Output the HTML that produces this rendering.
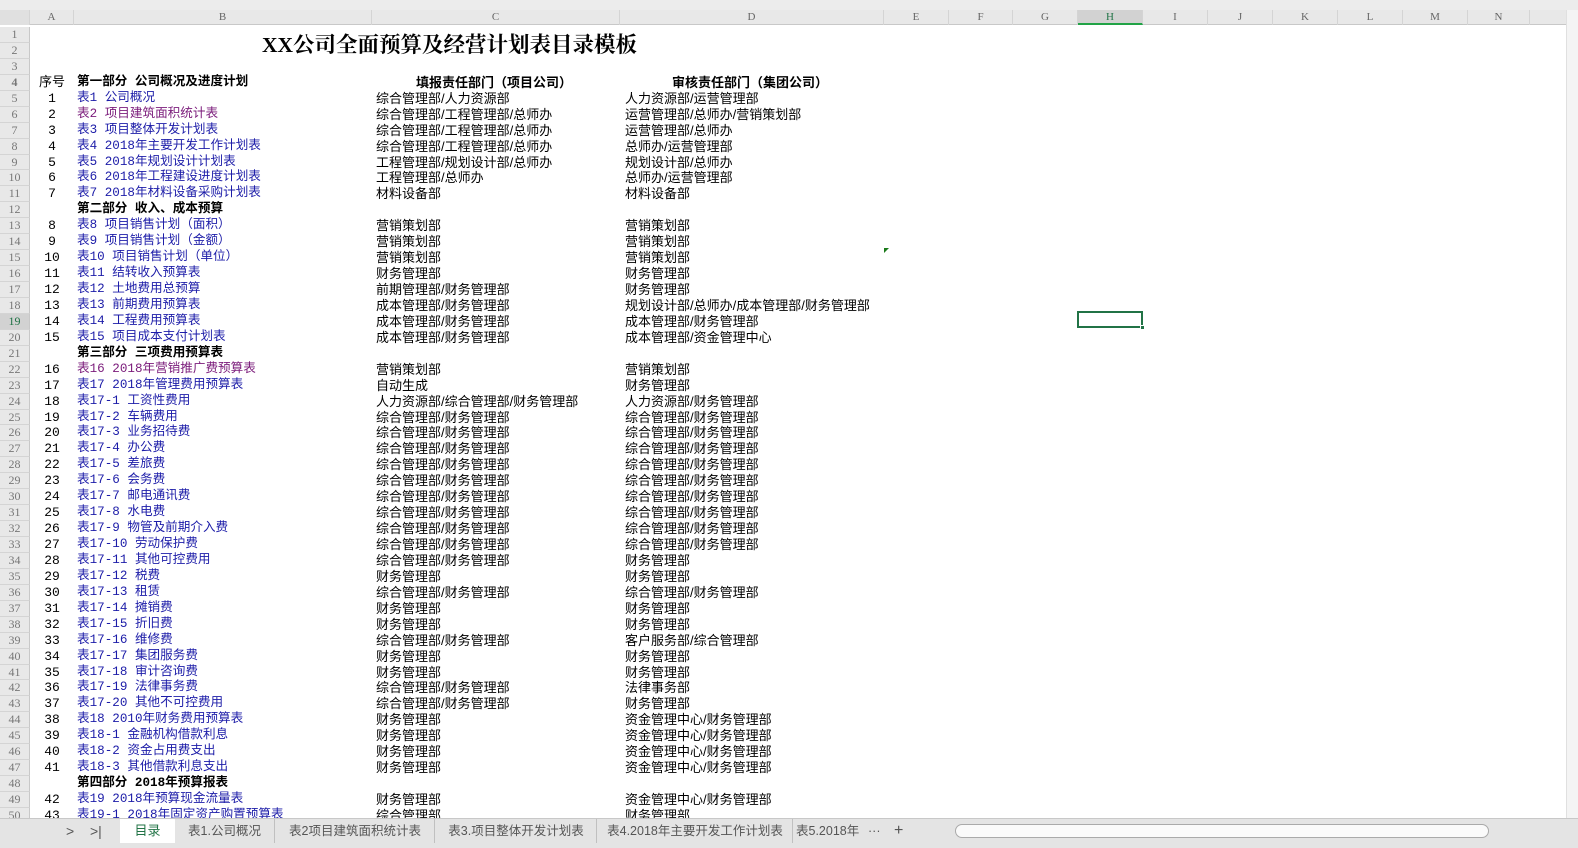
<!DOCTYPE html>
<html><head><meta charset="utf-8"><style>
*{margin:0;padding:0;box-sizing:border-box}
body{width:1578px;height:848px;overflow:hidden;background:#fff;font-family:"Liberation Sans","Noto Sans CJK SC",sans-serif;font-size:13px;position:relative}
#top{position:absolute;left:0;top:0;width:1578px;height:10px;background:#ececec}
#ch{position:absolute;left:0;top:10px;width:1578px;height:15px;background:#e8e8e8;border-bottom:1px solid #c8c8c8;color:#666;font-family:"Liberation Serif",serif;font-size:11px}
#ch span{position:absolute;top:0;height:15px;line-height:15px;text-align:center;border-right:1px solid #d4d4d4}
#rows{position:absolute;left:0;top:27px;width:1558px}
.r{position:relative;height:15.95px;line-height:15.95px;white-space:nowrap}
.r .n{position:absolute;left:0;width:30px;height:100%;background:#e8e8e8;color:#777;text-align:center;border-bottom:1px solid #d4d4d4;border-right:1px solid #c8c8c8;font-family:"Liberation Serif",serif;font-size:12px}
.r .a{position:absolute;left:30px;width:44px;text-align:center;font-family:"Liberation Mono","Noto Sans CJK SC",monospace}
.r .b{position:absolute;left:77px;color:#1c1ca8;font-size:12.6px;font-family:"Liberation Mono","Noto Sans CJK SC",monospace}
.r .c{position:absolute;left:376px}
.r .d{position:absolute;left:625px}
.p{color:#7a1a7a!important}
.h{font-weight:bold;color:#000!important}
#right{position:absolute;right:0;top:10px;width:12px;height:808px;background:#f4f4f4;border-left:1px solid #e0e0e0}
#tabs{position:absolute;left:0;top:818px;width:1578px;height:30px;background:#e4e4e4;border-top:1px solid #c8c8c8}
#tabs span{position:absolute;top:0;height:24px;line-height:24px;color:#555;font-size:12.5px}
</style></head><body>
<div id="top"></div>
<div id="ch">
<span style="left:0;width:30px;background:#e0e0e0"></span>
<span style="left:30px;width:44px">A</span>
<span style="left:74px;width:298px">B</span>
<span style="left:372px;width:248px">C</span>
<span style="left:620px;width:264px">D</span>
<span style="left:884px;width:65px">E</span>
<span style="left:949px;width:64px">F</span>
<span style="left:1013px;width:65px">G</span>
<span style="left:1078px;width:65px;background:#d2d2d2;color:#217346;border-bottom:2px solid #21a346">H</span>
<span style="left:1143px;width:65px">I</span>
<span style="left:1208px;width:65px">J</span>
<span style="left:1273px;width:65px">K</span>
<span style="left:1338px;width:65px">L</span>
<span style="left:1403px;width:65px">M</span>
<span style="left:1468px;width:62px">N</span>
</div>
<div id="rows">
<div class="r"><span class="n">1</span></div>
<div class="r"><span class="n">2</span><span style="position:absolute;left:262px;top:-5px;font-size:21.5px;font-weight:bold;font-family:'Liberation Serif','Noto Serif CJK SC',serif">XX公司全面预算及经营计划表目录模板</span></div>
<div class="r"><span class="n">3</span></div>
<div class="r h"><span class="n">4</span><span class="a h" style="font-weight:normal">序号</span><span class="b h">第一部分  公司概况及进度计划</span><span class="c h" style="left:416px">填报责任部门（项目公司）</span><span class="d h" style="left:672px">审核责任部门（集团公司）</span></div>
<div class="r"><span class="n">5</span><span class="a">1</span><span class="b">表1 公司概况</span><span class="c">综合管理部/人力资源部</span><span class="d">人力资源部/运营管理部</span></div>
<div class="r"><span class="n">6</span><span class="a">2</span><span class="b p">表2 项目建筑面积统计表</span><span class="c">综合管理部/工程管理部/总师办</span><span class="d">运营管理部/总师办/营销策划部</span></div>
<div class="r"><span class="n">7</span><span class="a">3</span><span class="b">表3 项目整体开发计划表</span><span class="c">综合管理部/工程管理部/总师办</span><span class="d">运营管理部/总师办</span></div>
<div class="r"><span class="n">8</span><span class="a">4</span><span class="b">表4 2018年主要开发工作计划表</span><span class="c">综合管理部/工程管理部/总师办</span><span class="d">总师办/运营管理部</span></div>
<div class="r"><span class="n">9</span><span class="a">5</span><span class="b">表5 2018年规划设计计划表</span><span class="c">工程管理部/规划设计部/总师办</span><span class="d">规划设计部/总师办</span></div>
<div class="r"><span class="n">10</span><span class="a">6</span><span class="b">表6 2018年工程建设进度计划表</span><span class="c">工程管理部/总师办</span><span class="d">总师办/运营管理部</span></div>
<div class="r"><span class="n">11</span><span class="a">7</span><span class="b">表7 2018年材料设备采购计划表</span><span class="c">材料设备部</span><span class="d">材料设备部</span></div>
<div class="r"><span class="n">12</span><span class="b h">第二部分   收入、成本预算</span></div>
<div class="r"><span class="n">13</span><span class="a">8</span><span class="b">表8 项目销售计划（面积）</span><span class="c">营销策划部</span><span class="d">营销策划部</span></div>
<div class="r"><span class="n">14</span><span class="a">9</span><span class="b">表9 项目销售计划（金额）</span><span class="c">营销策划部</span><span class="d">营销策划部</span></div>
<div class="r"><span class="n">15</span><span class="a">10</span><span class="b">表10 项目销售计划（单位）</span><span class="c">营销策划部</span><span class="d">营销策划部</span></div>
<div class="r"><span class="n">16</span><span class="a">11</span><span class="b">表11 结转收入预算表</span><span class="c">财务管理部</span><span class="d">财务管理部</span></div>
<div class="r"><span class="n">17</span><span class="a">12</span><span class="b">表12 土地费用总预算</span><span class="c">前期管理部/财务管理部</span><span class="d">财务管理部</span></div>
<div class="r"><span class="n">18</span><span class="a">13</span><span class="b">表13 前期费用预算表</span><span class="c">成本管理部/财务管理部</span><span class="d">规划设计部/总师办/成本管理部/财务管理部</span></div>
<div class="r"><span class="n" style="background:#d2d2d2;color:#217346">19</span><span class="a">14</span><span class="b">表14 工程费用预算表</span><span class="c">成本管理部/财务管理部</span><span class="d">成本管理部/财务管理部</span></div>
<div class="r"><span class="n">20</span><span class="a">15</span><span class="b">表15 项目成本支付计划表</span><span class="c">成本管理部/财务管理部</span><span class="d">成本管理部/资金管理中心</span></div>
<div class="r"><span class="n">21</span><span class="b h">第三部分   三项费用预算表</span></div>
<div class="r"><span class="n">22</span><span class="a">16</span><span class="b p">表16 2018年营销推广费预算表</span><span class="c">营销策划部</span><span class="d">营销策划部</span></div>
<div class="r"><span class="n">23</span><span class="a">17</span><span class="b">表17 2018年管理费用预算表</span><span class="c">自动生成</span><span class="d">财务管理部</span></div>
<div class="r"><span class="n">24</span><span class="a">18</span><span class="b">表17-1 工资性费用</span><span class="c">人力资源部/综合管理部/财务管理部</span><span class="d">人力资源部/财务管理部</span></div>
<div class="r"><span class="n">25</span><span class="a">19</span><span class="b">表17-2 车辆费用</span><span class="c">综合管理部/财务管理部</span><span class="d">综合管理部/财务管理部</span></div>
<div class="r"><span class="n">26</span><span class="a">20</span><span class="b">表17-3 业务招待费</span><span class="c">综合管理部/财务管理部</span><span class="d">综合管理部/财务管理部</span></div>
<div class="r"><span class="n">27</span><span class="a">21</span><span class="b">表17-4 办公费</span><span class="c">综合管理部/财务管理部</span><span class="d">综合管理部/财务管理部</span></div>
<div class="r"><span class="n">28</span><span class="a">22</span><span class="b">表17-5 差旅费</span><span class="c">综合管理部/财务管理部</span><span class="d">综合管理部/财务管理部</span></div>
<div class="r"><span class="n">29</span><span class="a">23</span><span class="b">表17-6  会务费</span><span class="c">综合管理部/财务管理部</span><span class="d">综合管理部/财务管理部</span></div>
<div class="r"><span class="n">30</span><span class="a">24</span><span class="b">表17-7  邮电通讯费</span><span class="c">综合管理部/财务管理部</span><span class="d">综合管理部/财务管理部</span></div>
<div class="r"><span class="n">31</span><span class="a">25</span><span class="b">表17-8 水电费</span><span class="c">综合管理部/财务管理部</span><span class="d">综合管理部/财务管理部</span></div>
<div class="r"><span class="n">32</span><span class="a">26</span><span class="b">表17-9 物管及前期介入费</span><span class="c">综合管理部/财务管理部</span><span class="d">综合管理部/财务管理部</span></div>
<div class="r"><span class="n">33</span><span class="a">27</span><span class="b">表17-10 劳动保护费</span><span class="c">综合管理部/财务管理部</span><span class="d">综合管理部/财务管理部</span></div>
<div class="r"><span class="n">34</span><span class="a">28</span><span class="b">表17-11 其他可控费用</span><span class="c">综合管理部/财务管理部</span><span class="d">财务管理部</span></div>
<div class="r"><span class="n">35</span><span class="a">29</span><span class="b">表17-12 税费</span><span class="c">财务管理部</span><span class="d">财务管理部</span></div>
<div class="r"><span class="n">36</span><span class="a">30</span><span class="b">表17-13 租赁</span><span class="c">综合管理部/财务管理部</span><span class="d">综合管理部/财务管理部</span></div>
<div class="r"><span class="n">37</span><span class="a">31</span><span class="b">表17-14 摊销费</span><span class="c">财务管理部</span><span class="d">财务管理部</span></div>
<div class="r"><span class="n">38</span><span class="a">32</span><span class="b">表17-15 折旧费</span><span class="c">财务管理部</span><span class="d">财务管理部</span></div>
<div class="r"><span class="n">39</span><span class="a">33</span><span class="b">表17-16  维修费</span><span class="c">综合管理部/财务管理部</span><span class="d">客户服务部/综合管理部</span></div>
<div class="r"><span class="n">40</span><span class="a">34</span><span class="b">表17-17 集团服务费</span><span class="c">财务管理部</span><span class="d">财务管理部</span></div>
<div class="r"><span class="n">41</span><span class="a">35</span><span class="b">表17-18  审计咨询费</span><span class="c">财务管理部</span><span class="d">财务管理部</span></div>
<div class="r"><span class="n">42</span><span class="a">36</span><span class="b">表17-19 法律事务费</span><span class="c">综合管理部/财务管理部</span><span class="d">法律事务部</span></div>
<div class="r"><span class="n">43</span><span class="a">37</span><span class="b">表17-20 其他不可控费用</span><span class="c">综合管理部/财务管理部</span><span class="d">财务管理部</span></div>
<div class="r"><span class="n">44</span><span class="a">38</span><span class="b">表18 2010年财务费用预算表</span><span class="c">财务管理部</span><span class="d">资金管理中心/财务管理部</span></div>
<div class="r"><span class="n">45</span><span class="a">39</span><span class="b">表18-1 金融机构借款利息</span><span class="c">财务管理部</span><span class="d">资金管理中心/财务管理部</span></div>
<div class="r"><span class="n">46</span><span class="a">40</span><span class="b">表18-2  资金占用费支出</span><span class="c">财务管理部</span><span class="d">资金管理中心/财务管理部</span></div>
<div class="r"><span class="n">47</span><span class="a">41</span><span class="b">表18-3 其他借款利息支出</span><span class="c">财务管理部</span><span class="d">资金管理中心/财务管理部</span></div>
<div class="r"><span class="n">48</span><span class="b h">第四部分   2018年预算报表</span></div>
<div class="r"><span class="n">49</span><span class="a">42</span><span class="b">表19 2018年预算现金流量表</span><span class="c">财务管理部</span><span class="d">资金管理中心/财务管理部</span></div>
<div class="r"><span class="n">50</span><span class="a">43</span><span class="b">表19-1 2018年固定资产购置预算表</span><span class="c">综合管理部</span><span class="d">财务管理部</span></div>
</div>
<div style="position:absolute;left:1077px;top:311px;width:66px;height:17px;border:2px solid #217346"></div>
<div style="position:absolute;left:1140px;top:325px;width:5px;height:5px;background:#217346;border:1px solid #fff"></div>
<div style="position:absolute;left:884px;top:248px;width:0;height:0;border-top:5px solid #1a7a1a;border-right:5px solid transparent"></div>
<div id="right"></div>
<div id="tabs">
<span style="left:66px;font-size:14px">&gt;</span>
<span style="left:90px;font-size:14px">&gt;|</span>
<span style="left:120px;width:55px;background:#fff;color:#217346;text-align:center;font-size:13px">目录</span>
<span style="left:175px;width:100px;text-align:center;border-right:1px solid #c0c0c0">表1.公司概况</span>
<span style="left:276px;width:159px;text-align:center;border-right:1px solid #c0c0c0">表2项目建筑面积统计表</span>
<span style="left:436px;width:161px;text-align:center;border-right:1px solid #c0c0c0">表3.项目整体开发计划表</span>
<span style="left:598px;width:195px;text-align:center;border-right:1px solid #c0c0c0">表4.2018年主要开发工作计划表</span>
<span style="left:796px">表5.2018年</span>
<span style="left:868px">···</span>
<span style="left:894px;font-size:16px">+</span>
<span style="left:955px;top:5px;width:534px;height:14px;border:1px solid #aaa;border-radius:7px;background:#fafafa"></span>
</div>
</body></html>
